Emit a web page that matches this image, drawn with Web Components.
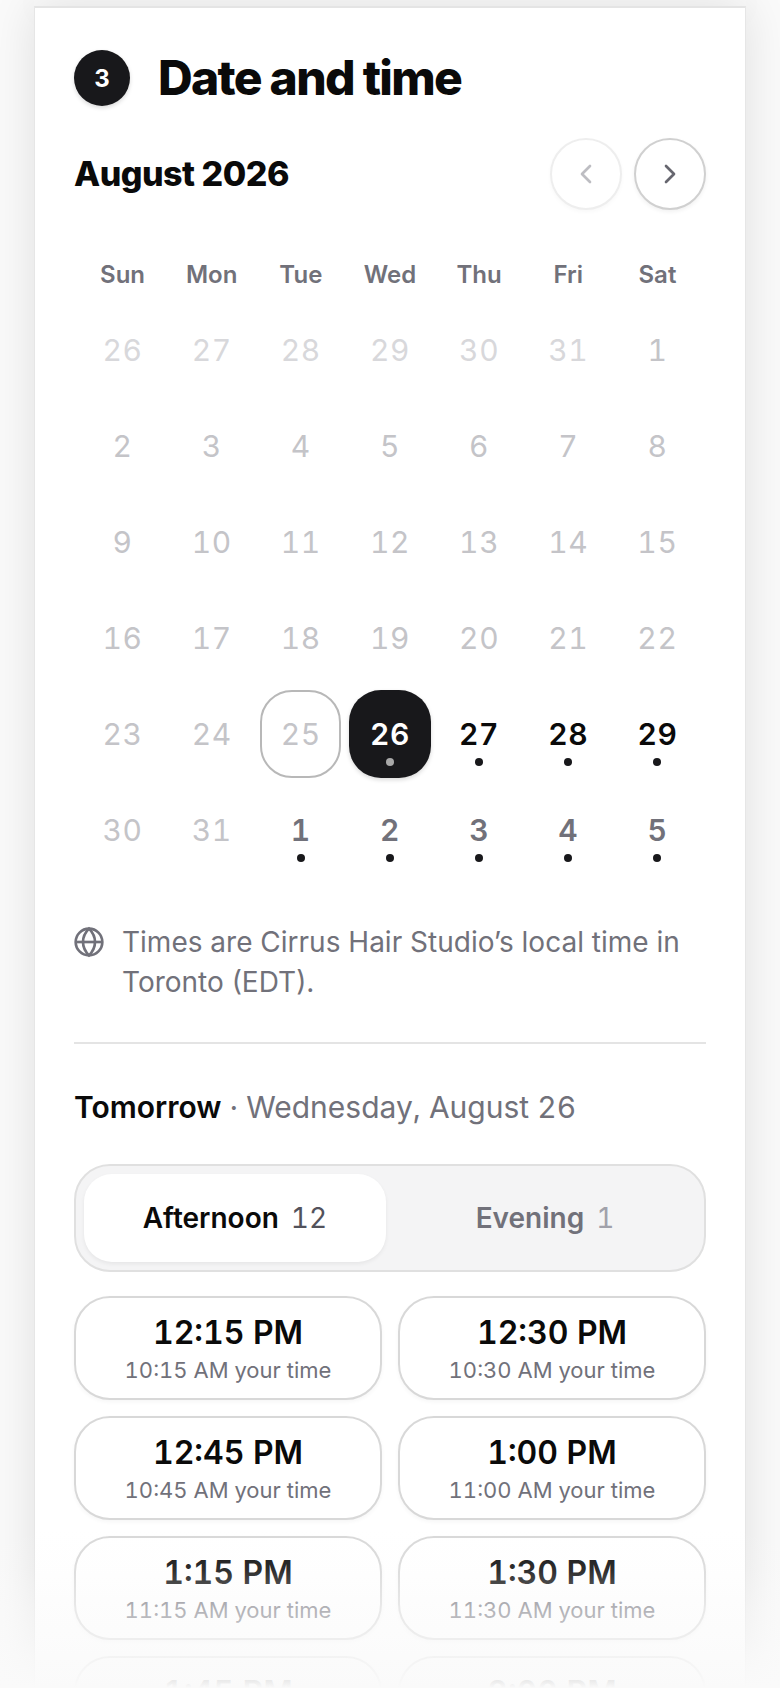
<!doctype html>
<html><head><meta charset="utf-8"><style>
html,body{margin:0;padding:0;height:1688px;overflow:hidden;background:#fafafa;font-family:Inter,"Liberation Sans",sans-serif;color:#0a0a0a}
</style></head><body>
<booking-page>
  <step-heading n="3">Date and time</step-heading>
  <month-nav>August 2026</month-nav>
  <cal-grid></cal-grid>
  <tz-note>Times are Cirrus Hair Studio’s local time in Toronto (EDT).</tz-note>
  <date-title strong="Tomorrow">· Wednesday, August 26</date-title>
  <period-tabs></period-tabs>
  <slot-grid></slot-grid>
</booking-page>
<script>
function def(name, css, html, init){
  customElements.define(name, class extends HTMLElement{
    connectedCallback(){
      if(this.shadowRoot) return;
      const r=this.attachShadow({mode:'open'});
      r.innerHTML='<style>'+css+'</style>'+(typeof html==='function'?html(this):html);
      if(init) init(r,this);
    }
  });
}
def('booking-page',`
:host{display:block;height:1688px;position:relative;overflow:hidden}
.top{margin:0 34px;height:6px;background:#fafafa;box-shadow:0 0 44px rgba(0,0,0,.11)}
.card{margin:0 34px;height:1682px;box-sizing:border-box;background:#fff;border-top:2px solid #e4e4e4;border-left:1px solid #e6e6e6;border-right:1px solid #e6e6e6;padding:42px 39px 0;box-shadow:0 0 44px rgba(0,0,0,.11);display:flex;flex-direction:column}
.fade{position:absolute;left:0;right:0;bottom:0;height:160px;background:linear-gradient(to bottom,rgba(250,250,250,0) 0,rgba(250,250,250,.15) 42px,rgba(250,250,250,.48) 81px,rgba(250,250,250,.65) 111px,rgba(250,250,250,.8) 128px,rgba(250,250,250,.93) 152px,#fafafa 160px);pointer-events:none}
`,`<div class="top"></div><div class="card"><slot></slot></div><div class="fade"></div>`);

def('step-heading',`
:host{display:flex;align-items:center;gap:28px;height:56px}
.n{width:56px;height:56px;border-radius:50%;background:#18181b;color:#fff;font:700 24px Inter,sans-serif;display:flex;align-items:center;justify-content:center;box-shadow:0 2px 4px rgba(0,0,0,.15)}
h2{margin:0;font:800 48px/56px Inter,sans-serif;letter-spacing:-1.7px;color:#0a0a0a}
`,h=>`<div class="n">${h.getAttribute('n')}</div><h2><slot></slot></h2>`);

const chev=d=>`<svg width="32" height="32" viewBox="0 0 24 24" fill="none" stroke="currentColor" stroke-width="2" stroke-linecap="round" stroke-linejoin="round"><path d="${d}"/></svg>`;
def('month-nav',`
:host{display:flex;align-items:center;justify-content:space-between;margin-top:32px;height:72px}
.t{font:800 34px/44px Inter,sans-serif;letter-spacing:-.5px;color:#0a0a0a}
.b{display:flex;gap:12px}
.btn{width:72px;height:72px;box-sizing:border-box;border-radius:50%;background:#fff;border:2px solid #d0d0d0;color:#66666f;display:flex;align-items:center;justify-content:center;box-shadow:0 2px 4px rgba(0,0,0,.06)}
.off{border-color:#eeeeee;color:#bdbdc2;box-shadow:0 2px 4px rgba(0,0,0,.03)}
`,`<div class="t"><slot></slot></div><div class="b"><div class="btn off">${chev('M15 6l-6 6 6 6')}</div><div class="btn">${chev('M9 6l6 6-6 6')}</div></div>`);

def('cal-day',`
:host{display:block;height:88px;box-sizing:border-box;border-radius:32px;position:relative;border:2px solid transparent;display:flex;align-items:center;justify-content:center;font:400 30px Inter,sans-serif;font-variant-numeric:tabular-nums;letter-spacing:.6px;color:#c4c4c8}
:host([kind=out]){color:#d8d8db}
:host([kind=today]){border-color:#b8b8b8}
:host([kind=on]){color:#0a0a0a;font-weight:600}
:host([kind=next]){color:#71717a;font-weight:600}
:host([kind=sel]){background:#18181b;color:#fff;font-weight:600;box-shadow:0 2px 4px rgba(0,0,0,.15)}
i{position:absolute;left:50%;bottom:10px;width:8px;height:8px;margin-left:-4px;border-radius:50%;background:#18181b}
:host([kind=sel]) i{background:#a8a8a8}
`,h=>`<slot></slot>`+(/on|next|sel/.test(h.getAttribute('kind'))?'<i></i>':''));

def('cal-grid',`
:host{display:block;margin-top:40px;padding:0 8px}
.g{display:grid;grid-template-columns:repeat(7,1fr);gap:8px}
.w{grid-column:span 1;height:48px;display:flex;align-items:center;justify-content:center;font:600 24px Inter,sans-serif;color:#71717a}
`,()=>{
  const w=['Sun','Mon','Tue','Wed','Thu','Fri','Sat'].map(x=>`<div class="w">${x}</div>`).join('');
  const ds=[];
  [26,27,28,29,30,31].forEach(d=>ds.push([d,'out']));
  for(let d=1;d<=24;d++)ds.push([d,'past']);
  ds.push([25,'today'],[26,'sel'],[27,'on'],[28,'on'],[29,'on'],[30,'past'],[31,'past']);
  for(let d=1;d<=5;d++)ds.push([d,'next']);
  return `<div class="g">${w}${ds.map(([d,k])=>`<cal-day kind="${k}">${d}</cal-day>`).join('')}</div>`;
});

def('tz-note',`
:host{display:flex;gap:16px;margin-top:48px;font:400 28px/40px Inter,sans-serif;color:#71717a;padding-bottom:40px;border-bottom:2px solid #e4e4e4}
svg{flex:none;width:32px;height:32px;margin-top:4px;margin-left:-1px}
div{margin-left:1px}
`,`<svg viewBox="0 0 24 24" fill="none" stroke="currentColor" stroke-width="2"><circle cx="12" cy="12" r="10"/><path d="M2 12h20"/><path d="M12 2c3 3 4.5 6.3 4.5 10S15 19 12 22c-3-3-4.5-6.3-4.5-10S9 5 12 2z"/></svg><div><slot></slot></div>`);

def('date-title',`
:host{display:block;margin-top:43px;font:400 30px/40px Inter,sans-serif;font-variant-numeric:tabular-nums;color:#71717a}
b{font-weight:600;color:#0a0a0a}
`,h=>`<b>${h.getAttribute('strong')}</b> <slot></slot>`);

def('period-tabs',`
:host{display:grid;grid-template-columns:1fr 1fr;gap:8px;margin-top:37px;padding:8px;border:2px solid #e0e0e0;border-radius:36px;background:#f4f4f5}
.t{height:88px;border-radius:28px;display:flex;align-items:center;justify-content:center;gap:12px;font:600 28px Inter,sans-serif;font-variant-numeric:tabular-nums;color:#71717a}
.t span{font-weight:400;color:#a1a1aa}
.a{background:#fff;color:#0a0a0a;box-shadow:0 2px 4px rgba(0,0,0,.06)}
.a span{color:#52525b}
`,`<div class="t a">Afternoon <span>12</span></div><div class="t">Evening <span>1</span></div>`);

def('time-slot',`
:host{display:flex;flex-direction:column;align-items:center;justify-content:center;height:104px;box-sizing:border-box;padding-top:5px;border:2px solid #d8d8d8;border-radius:36px;background:#fff;box-shadow:0 2px 4px rgba(0,0,0,.04)}
.m{font:600 32px/40px Inter,sans-serif;font-variant-numeric:tabular-nums;color:#0a0a0a;margin-top:-2px}
.s{font:400 22px/32px Inter,sans-serif;font-variant-numeric:tabular-nums;color:#71717a;margin-top:1px}
`,h=>`<div class="m">${h.getAttribute('t')}</div><div class="s">${h.getAttribute('s')} your time</div>`);

def('slot-grid',`
:host{display:grid;grid-template-columns:1fr 1fr;gap:16px;margin-top:24px}
`,()=>[['12:15 PM','10:15 AM'],['12:30 PM','10:30 AM'],['12:45 PM','10:45 AM'],['1:00 PM','11:00 AM'],['1:15 PM','11:15 AM'],['1:30 PM','11:30 AM'],['1:45 PM','11:45 AM'],['2:00 PM','12:00 PM']].map(([t,s])=>`<time-slot t="${t}" s="${s}"></time-slot>`).join(''));
</script>
</body></html>
